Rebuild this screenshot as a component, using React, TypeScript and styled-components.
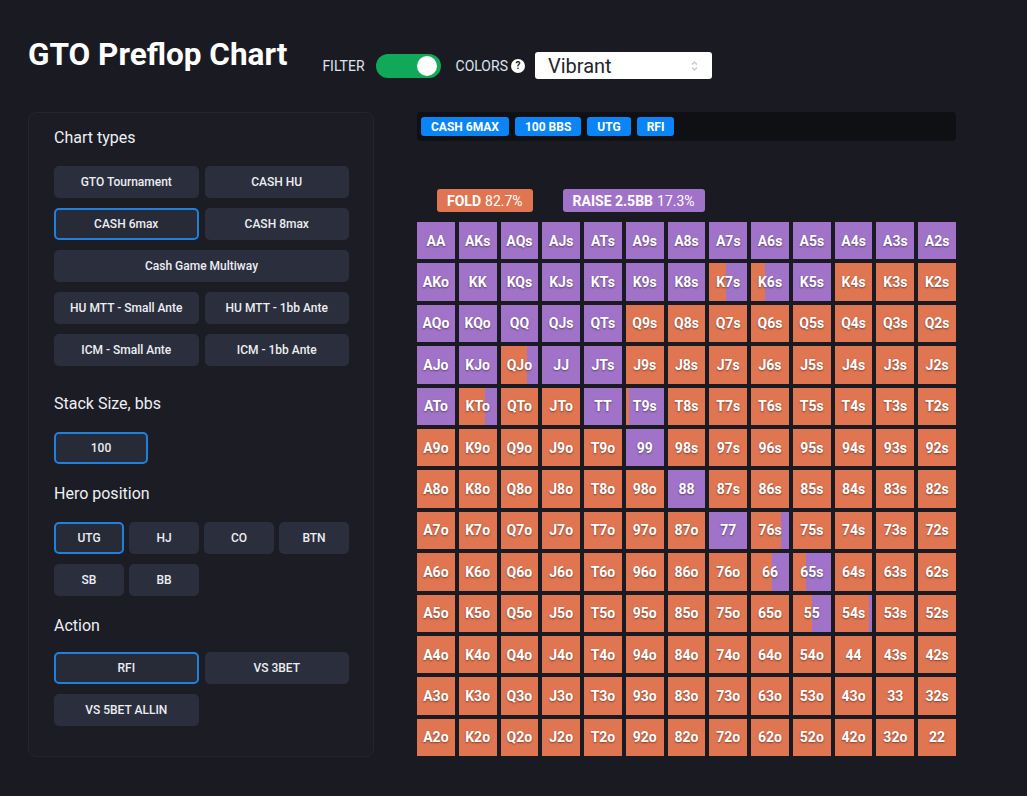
import React from 'react';
import styled, { createGlobalStyle } from 'styled-components';

const FOLD = '#e07552';
const RAISE = '#a073c8';

const GlobalStyle = createGlobalStyle`
  html, body {
    margin: 0;
    background: #1a1b22;
  }
  body {
    font-family: Roboto, 'Liberation Sans', Arial, sans-serif;
    color: #eceef3;
  }
`;

const Page = styled.div`
  width: 1027px;
  height: 796px;
  box-sizing: border-box;
  padding: 37px 0 0 28px;
  overflow: hidden;
`;

const Header = styled.header`
  display: flex;
  align-items: center;
  height: 35px;
`;

const Title = styled.h1`
  margin: 0;
  font-size: 31.5px;
  line-height: 35px;
  font-weight: 700;
  color: #ffffff;
`;

const Controls = styled.div`
  display: flex;
  align-items: center;
  margin: 22px 0 0 35px;
`;

const Label = styled.span<{ $gap?: number }>`
  font-size: 14px;
  color: #dde4ee;
  margin-right: ${(p) => p.$gap ?? 0}px;
`;

const Toggle = styled.div`
  width: 65px;
  height: 24px;
  border-radius: 12px;
  background: #10a957;
  display: flex;
  align-items: center;
  justify-content: flex-end;
  padding-right: 4px;
  box-sizing: border-box;
  margin-right: 15px;
`;

const Knob = styled.div`
  width: 20px;
  height: 20px;
  border-radius: 50%;
  background: #ffffff;
`;

const Help = styled.span`
  width: 14px;
  height: 14px;
  border-radius: 50%;
  background: #ffffff;
  color: #1a1b22;
  font-size: 10px;
  font-weight: 700;
  display: inline-flex;
  align-items: center;
  justify-content: center;
  margin: 0 10px 0 3px;
`;

const Select = styled.div`
  width: 177px;
  height: 27px;
  box-sizing: border-box;
  background: #ffffff;
  border-radius: 3px;
  display: flex;
  align-items: center;
  justify-content: space-between;
  padding: 0 14px 0 13px;
  font-size: 20px;
  color: #23252d;
`;

const Main = styled.main`
  display: flex;
  align-items: flex-start;
  margin-top: 40px;
`;

const Panel = styled.aside`
  width: 346px;
  box-sizing: border-box;
  border: 1px solid #24252e;
  border-radius: 8px;
  background: #1b1c24;
  padding: 15px 24px 30px 25px;
`;

const Section = styled.section<{ $top: number }>`
  margin-top: ${(p) => p.$top}px;
`;

const Heading = styled.h3<{ $gap?: number }>`
  margin: 0 0 ${(p) => p.$gap ?? 18}px;
  font-size: 16px;
  line-height: 20px;
  font-weight: 400;
  color: #eef0f5;
`;

const ButtonGrid = styled.div<{ $cols: number }>`
  display: grid;
  grid-template-columns: repeat(${(p) => p.$cols}, 1fr);
  column-gap: ${(p) => (p.$cols === 4 ? 5 : 6)}px;
  row-gap: 10px;
`;

const OptionButton = styled.button<{ $active?: boolean; $span?: number }>`
  grid-column: span ${(p) => p.$span ?? 1};
  height: 32px;
  border-radius: 5px;
  border: 2px solid ${(p) => (p.$active ? '#1f80e0' : 'transparent')};
  background: ${(p) => (p.$active ? '#272a37' : '#2b2e3c')};
  color: #eceef3;
  font-family: Roboto, 'Liberation Sans', Arial, sans-serif;
  font-size: 12px;
  font-weight: 500;
  padding: 0;
  cursor: pointer;
`;

const StackButton = styled(OptionButton)`
  width: 94px;
`;

const Right = styled.div`
  margin-left: 43px;
  width: 539px;
`;

const TagBar = styled.div`
  height: 29px;
  box-sizing: border-box;
  background: #0f1014;
  border-radius: 4px;
  display: flex;
  align-items: center;
  gap: 6px;
  padding: 0 4px;
`;

const Tag = styled.span`
  height: 19px;
  display: inline-flex;
  align-items: center;
  padding: 0 10px;
  border-radius: 3px;
  background: #0b85f5;
  color: #ffffff;
  font-size: 12px;
  font-weight: 700;
`;

const Legend = styled.div`
  display: flex;
  gap: 30px;
  margin-top: 48px;
  padding-left: 20px;
`;

const LegendItem = styled.span<{ $color: string }>`
  height: 23px;
  display: inline-flex;
  align-items: center;
  padding: 0 10px;
  border-radius: 3px;
  background: ${(p) => p.$color};
  color: #ffffff;
  font-size: 14px;
  b {
    font-weight: 700;
    margin-right: 4px;
  }
`;

const Grid = styled.div`
  margin-top: 10px;
  display: grid;
  grid-template-columns: repeat(13, 1fr);
  grid-auto-rows: 37.4px;
  gap: 4px;
`;

const Cell = styled.div<{ $fold: number }>`
  display: flex;
  align-items: center;
  justify-content: center;
  background: linear-gradient(
    to right,
    ${FOLD} 0,
    ${FOLD} ${(p) => p.$fold}%,
    ${RAISE} ${(p) => p.$fold}%,
    ${RAISE} 100%
  );
  color: #ffffff;
  font-size: 14px;
  font-weight: 700;
  text-shadow: 0 1px 2px rgba(0, 0, 0, 0.45);
`;

const RANKS = ['A', 'K', 'Q', 'J', 'T', '9', '8', '7', '6', '5', '4', '3', '2'];

const RAISE_FREQ: Record<string, number> = {
  AA: 1, AKs: 1, AQs: 1, AJs: 1, ATs: 1, A9s: 1, A8s: 1, A7s: 1, A6s: 1, A5s: 1, A4s: 1, A3s: 1, A2s: 1,
  AKo: 1, KK: 1, KQs: 1, KJs: 1, KTs: 1, K9s: 1, K8s: 1, K7s: 0.55, K6s: 0.64, K5s: 1,
  AQo: 1, KQo: 1, QQ: 1, QJs: 1, QTs: 1,
  AJo: 1, KJo: 1, QJo: 0.29, JJ: 1, JTs: 1,
  ATo: 1, KTo: 0.32, TT: 1, T9s: 0.91,
  '99': 1, '88': 1, '77': 1, '76s': 0.21, '66': 0.45, '65s': 0.66, '55': 0.49, '54s': 0.08
};

const handName = (r: number, c: number) => {
  if (r === c) return RANKS[r] + RANKS[c];
  if (r < c) return RANKS[r] + RANKS[c] + 's';
  return RANKS[c] + RANKS[r] + 'o';
};

const chartTypes = [
  { label: 'GTO Tournament' },
  { label: 'CASH HU' },
  { label: 'CASH 6max', active: true },
  { label: 'CASH 8max' },
  { label: 'Cash Game Multiway', span: 2 },
  { label: 'HU MTT - Small Ante' },
  { label: 'HU MTT - 1bb Ante' },
  { label: 'ICM - Small Ante' },
  { label: 'ICM - 1bb Ante' }
];

const positions = ['UTG', 'HJ', 'CO', 'BTN', 'SB', 'BB'];
const actions = ['RFI', 'VS 3BET', 'VS 5BET ALLIN'];

const SelectArrows = () => (
  <svg width="7" height="12" viewBox="0 0 7 12" fill="none" stroke="#c3c6cc" strokeWidth="1.2">
    <path d="M1 4.5 L3.5 2 L6 4.5" />
    <path d="M1 7.5 L3.5 10 L6 7.5" />
  </svg>
);

export default function App() {
  return (
    <>
      <GlobalStyle />
      <Page>
        <Header>
          <Title>GTO Preflop Chart</Title>
          <Controls>
            <Label $gap={11}>FILTER</Label>
            <Toggle>
              <Knob />
            </Toggle>
            <Label>COLORS</Label>
            <Help>?</Help>
            <Select>
              <span>Vibrant</span>
              <SelectArrows />
            </Select>
          </Controls>
        </Header>

        <Main>
          <Panel>
            <Section $top={0}>
              <Heading>Chart types</Heading>
              <ButtonGrid $cols={2}>
                {chartTypes.map((item) => (
                  <OptionButton key={item.label} $active={item.active} $span={item.span}>
                    {item.label}
                  </OptionButton>
                ))}
              </ButtonGrid>
            </Section>

            <Section $top={28}>
              <Heading>Stack Size, bbs</Heading>
              <StackButton $active>100</StackButton>
            </Section>

            <Section $top={20}>
              <Heading>Hero position</Heading>
              <ButtonGrid $cols={4}>
                {positions.map((pos, i) => (
                  <OptionButton key={pos} $active={i === 0}>
                    {pos}
                  </OptionButton>
                ))}
              </ButtonGrid>
            </Section>

            <Section $top={20}>
              <Heading $gap={16}>Action</Heading>
              <ButtonGrid $cols={2}>
                {actions.map((a, i) => (
                  <OptionButton key={a} $active={i === 0}>
                    {a}
                  </OptionButton>
                ))}
              </ButtonGrid>
            </Section>
          </Panel>

          <Right>
            <TagBar>
              <Tag>CASH 6MAX</Tag>
              <Tag>100 BBS</Tag>
              <Tag>UTG</Tag>
              <Tag>RFI</Tag>
            </TagBar>

            <Legend>
              <LegendItem $color={FOLD}>
                <b>FOLD</b>82.7%
              </LegendItem>
              <LegendItem $color={RAISE}>
                <b>RAISE 2.5BB</b>17.3%
              </LegendItem>
            </Legend>

            <Grid>
              {RANKS.map((_, r) =>
                RANKS.map((__, c) => {
                  const name = handName(r, c);
                  const raise = RAISE_FREQ[name] ?? 0;
                  return (
                    <Cell key={name} $fold={Math.round((1 - raise) * 100)}>
                      {name}
                    </Cell>
                  );
                })
              )}
            </Grid>
          </Right>
        </Main>
      </Page>
    </>
  );
}
